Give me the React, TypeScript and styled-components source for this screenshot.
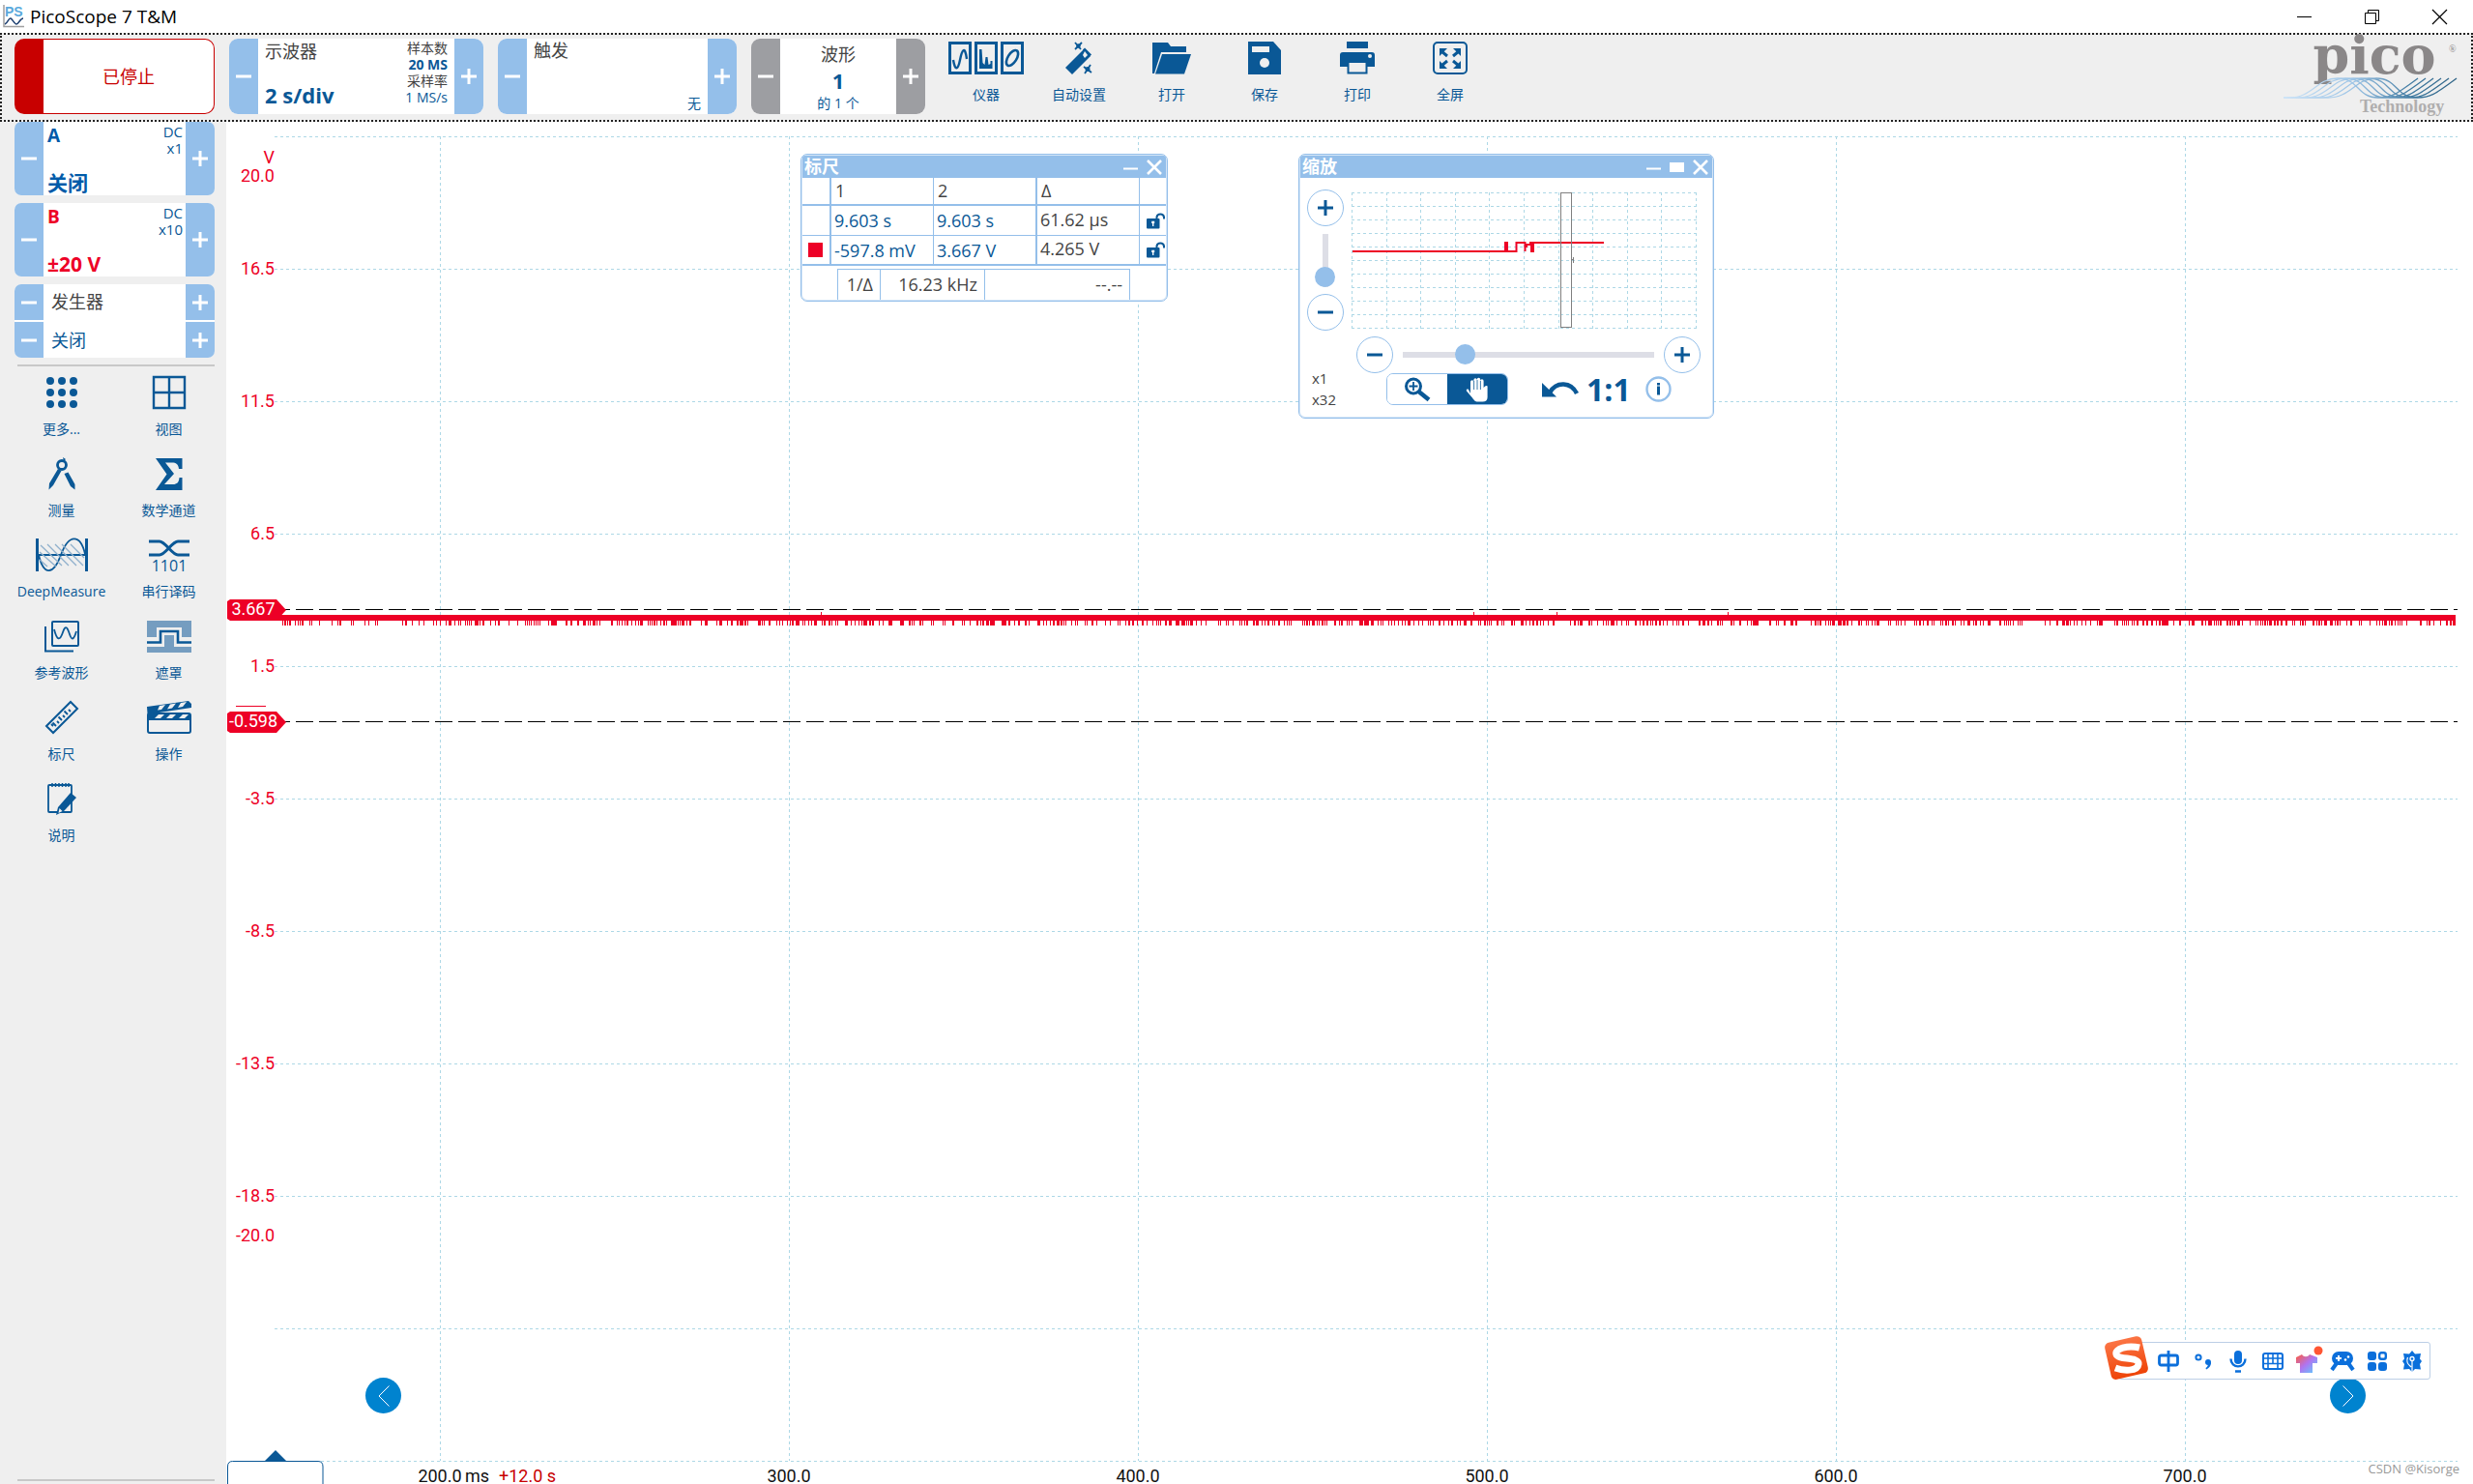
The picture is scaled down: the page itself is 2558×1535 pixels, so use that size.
import React, { ReactNode, useLayoutEffect, useMemo, useRef, useState } from "react";
import styled, { createGlobalStyle } from "styled-components";

const C = {
  blue: "#0a5896",
  light: "#94bfea",
  grey: "#9d9ea2",
  panel: "#efefef",
  text: "#444444",
  red: "#ed0026",
  stop: "#c80000",
  grid: "#add8e6",
};

const Global = createGlobalStyle`
  * { box-sizing: border-box; }
  body { margin: 0; background: #fff; overflow: hidden; }
  button { font: inherit; color: inherit; background: none; border: 0; padding: 0; margin: 0; cursor: pointer; }
  svg { display: block; overflow: visible; }
`;

const Page = styled.div`
  display: flex;
  flex-direction: column;
  height: 100vh;
  color: ${C.text};
  font: 14px/20px "Open Sans", "Noto Sans CJK SC", sans-serif;
`;

/* ---------- title bar ---------- */
const TitleBar = styled.header`
  display: flex;
  align-items: center;
  height: 34px;
  padding-left: 3px;
  gap: 6px;
  color: #000;
`;
const Title = styled.h1`
  flex: 1;
  margin: 0;
  font-size: 19px;
  line-height: 32px;
  font-weight: 400;
`;
const WindowButtons = styled.div`
  display: flex;
`;
const WindowButton = styled.button`
  display: grid;
  place-items: center;
  width: 70px;
  height: 34px;
`;

/* ---------- toolbar ---------- */
const Toolbar = styled.div`
  display: flex;
  align-items: flex-start;
  gap: 15px;
  padding: 4px 13px 6px;
  border: 2px dotted #222;
  background: ${C.panel};
`;
const StopButton = styled.button`
  width: 207px;
  height: 78px;
  overflow: hidden;
  border: 1px solid ${C.stop};
  border-left: 30px solid ${C.stop};
  border-radius: 10px;
  background: #fff;
  color: ${C.stop};
  font-size: 18px;
`;
const Stepper = styled.section<{ $width: number; $height: number; $radius: number }>`
  display: flex;
  width: ${(p) => p.$width}px;
  height: ${(p) => p.$height}px;
  border-radius: ${(p) => p.$radius}px;
  overflow: hidden;
  background: #fff;
`;
const StepButton = styled.button<{ $grey?: boolean }>`
  display: grid;
  place-items: center;
  flex: none;
  width: 30px;
  background: ${(p) => (p.$grey ? C.grey : C.light)};
`;
const StepColumn = styled.div`
  display: grid;
  grid-template-rows: 1fr 1fr;
  gap: 2px;
`;
const StepBody = styled.div<{ $pad: string }>`
  display: flex;
  flex: 1;
  justify-content: space-between;
  padding: ${(p) => p.$pad};
`;
const Stack = styled.div<{ $align?: string; $spread?: boolean }>`
  display: flex;
  flex-direction: column;
  flex: ${(p) => (p.$align === "center" ? 1 : "none")};
  align-items: ${(p) => p.$align || "flex-start"};
  justify-content: ${(p) => (p.$spread ? "space-between" : "flex-start")};
`;
const Txt = styled.span<{ $size?: number; $line?: number; $bold?: boolean; $color?: string }>`
  font-size: ${(p) => p.$size || 14}px;
  line-height: ${(p) => p.$line || 17}px;
  font-weight: ${(p) => (p.$bold ? 700 : 400)};
  color: ${(p) => p.$color || C.text};
  white-space: nowrap;
`;
const ToolRow = styled.nav`
  display: flex;
  padding-top: 3px;
`;
const Tool = styled.button`
  display: flex;
  flex-direction: column;
  align-items: center;
  gap: 11px;
  width: 96px;
  color: ${C.blue};
  font-size: 14px;
  line-height: 20px;
  white-space: nowrap;
`;
const Brand = styled.div`
  margin-left: auto;
`;

/* ---------- side bar ---------- */
const Main = styled.main`
  display: flex;
  flex: 1;
  min-height: 0;
`;
const Sidebar = styled.aside`
  display: flex;
  flex-direction: column;
  flex: none;
  width: 234px;
  background: ${C.panel};
`;
const Channels = styled.div`
  display: flex;
  flex-direction: column;
  gap: 8px;
  padding: 0 12px 7px 15px;
`;
const Divider = styled.hr`
  width: 204px;
  height: 2px;
  margin: 0 0 0 18px;
  border: 0;
  background: #c8c8c8;
`;
const ToolGrid = styled.nav`
  display: grid;
  grid-template-columns: 111px 111px;
  justify-items: center;
  row-gap: 19px;
  flex: 1;
  align-content: start;
  padding: 10px 0 0 8px;
`;
const SideFoot = styled.div`
  padding-bottom: 3px;
`;

/* ---------- chart ---------- */
const ChartArea = styled.section`
  position: relative;
  flex: 1;
  min-width: 0;
  overflow: hidden;
  background: #fff;
`;
const PageButton = styled.button<{ $side: "left" | "right" }>`
  position: absolute;
  bottom: 73px;
  ${(p) => (p.$side === "left" ? "left: 144px;" : "right: 111px;")}
  display: grid;
  place-items: center;
  width: 37px;
  height: 37px;
  border-radius: 50%;
  background: #0083cf;
`;
const Watermark = styled.span`
  position: absolute;
  right: 14px;
  bottom: 6px;
  font-size: 13px;
  color: #999;
`;

/* ---------- floating panels ---------- */
const Panel = styled.section<{ $left: number; $width: number }>`
  position: absolute;
  top: 33px;
  left: ${(p) => p.$left}px;
  width: ${(p) => p.$width}px;
  padding: 1px;
  overflow: hidden;
  border: 1px solid ${C.light};
  border-radius: 7px;
  background: #fff;
  box-shadow: inset 0 0 0 1px #d4e5f7;
`;
const PanelHead = styled.header`
  display: flex;
  align-items: center;
  gap: 9px;
  height: 23px;
  padding: 0 4px 0 2px;
  background: ${C.light};
`;
const PanelTitle = styled.h2`
  flex: 1;
  margin: 0;
  color: #fff;
  font-size: 18px;
  line-height: 23px;
  font-weight: 700;
`;
const RulerTable = styled.table`
  width: 100%;
  table-layout: fixed;
  border-collapse: separate;
  border-spacing: 0;
  font-size: 18px;
  line-height: 24px;
`;
const Cell = styled.td<{ $right?: number; $bottom?: number; $blue?: boolean; $delta?: boolean }>`
  height: 31px;
  padding: ${(p) => (p.$delta ? "0 0 3px 3px" : "0 0 0 3px")};
  border: 0 solid ${C.light};
  border-right-width: ${(p) => p.$right || 0}px;
  border-bottom-width: ${(p) => p.$bottom || 0}px;
  color: ${(p) => (p.$blue ? C.blue : C.text)};
  white-space: nowrap;
`;
const HeadCell = styled.th<{ $right?: number }>`
  height: 29px;
  padding: 0 0 2px 4px;
  border: 0 solid ${C.light};
  border-right-width: ${(p) => p.$right || 0}px;
  border-bottom-width: 2px;
  text-align: left;
  font-weight: 400;
`;
const Swatch = styled.i`
  display: block;
  width: 15px;
  height: 15px;
  margin-left: 3px;
  background: ${C.red};
`;
const LockButton = styled.button`
  display: block;
  margin-left: 4px;
`;
const FreqTable = styled.table`
  width: 303px;
  margin: 3px 0 0 36px;
  table-layout: fixed;
  border-collapse: separate;
  border-spacing: 0;
  border-left: 1px solid ${C.light};
  border-top: 1px solid ${C.light};
  font-size: 18px;
  line-height: 24px;
`;
const FreqCell = styled.td`
  height: 31px;
  padding: 0 7px 2px;
  border-right: 1px solid ${C.light};
  text-align: right;
  white-space: nowrap;
`;

const ZoomTop = styled.div`
  display: flex;
  gap: 8px;
  padding: 12px 7px 0;
`;
const ZoomVertical = styled.div`
  display: flex;
  flex-direction: column;
  align-items: center;
  justify-content: space-between;
  width: 38px;
  height: 146px;
`;
const MapWrap = styled.div`
  padding-top: 3px;
`;
const RoundButton = styled.button`
  display: grid;
  place-items: center;
  flex: none;
  width: 38px;
  height: 38px;
  border: 1px solid ${C.light};
  border-radius: 50%;
`;
const Slider = styled.input<{ $vertical?: boolean }>`
  appearance: none;
  margin: 0;
  background: transparent;
  width: ${(p) => (p.$vertical ? "21px" : "260px")};
  height: ${(p) => (p.$vertical ? "55px" : "21px")};
  ${(p) => (p.$vertical ? "writing-mode: vertical-lr; direction: rtl;" : "")}
  &::-webkit-slider-runnable-track {
    ${(p) => (p.$vertical ? "width: 6px;" : "height: 6px;")}
    background: #dddee6;
  }
  &::-webkit-slider-thumb {
    appearance: none;
    width: 21px;
    height: 21px;
    ${(p) => (p.$vertical ? "margin-left: -8px;" : "margin-top: -8px;")}
    border-radius: 50%;
    background: ${C.light};
  }
`;
const ZoomBottom = styled.div`
  display: grid;
  grid-template-columns: 58px 1fr;
  grid-template-rows: 38px 38px;
  padding: 6px 0 7px;
`;
const Factors = styled.div`
  grid-row: 1 / 3;
  align-self: end;
  display: flex;
  flex-direction: column;
  padding-left: 12px;
  font-size: 15px;
  line-height: 22px;
`;
const SliderRow = styled.div`
  display: flex;
  align-items: center;
  gap: 10px;
`;
const ActionRow = styled.div`
  display: flex;
  align-items: flex-start;
  gap: 35px;
  padding-left: 31px;
`;
const ModeSwitch = styled.div`
  display: flex;
  width: 126px;
  height: 33px;
  overflow: hidden;
  border: 1px solid ${C.light};
  border-radius: 7px;
`;
const ModeButton = styled.button<{ $on?: boolean }>`
  display: grid;
  place-items: center;
  flex: 1;
  background: ${(p) => (p.$on ? C.blue : "#fff")};
`;
const Actions = styled.div`
  display: flex;
  align-items: center;
  gap: 8px;
  height: 33px;
`;
const OneToOne = styled.button`
  width: 53px;
  text-align: left;
  color: ${C.blue};
  font-size: 32px;
  line-height: 32px;
  font-weight: 700;
`;

/* ---------- input method bar ---------- */
const ImeBar = styled.div`
  position: absolute;
  right: 44px;
  bottom: 108px;
  display: flex;
  align-items: center;
  height: 39px;
  padding-left: 33px;
  border: 1px solid #bccfe6;
  border-radius: 3px;
  background: #fff;
`;
const ImeLogo = styled.span`
  position: absolute;
  left: -16px;
  bottom: -2px;
`;
const ImeButton = styled.button`
  display: grid;
  place-items: center;
  width: 36px;
  height: 37px;
`;

/* ---------- small glyphs ---------- */
const Minus = ({ color = "#fff", size = 16 }: { color?: string; size?: number }) => (
  <svg width={size} height={size} viewBox="0 0 16 16"><path d="M0 8H16" stroke={color} strokeWidth="3" /></svg>
);
const Plus = ({ color = "#fff", size = 16 }: { color?: string; size?: number }) => (
  <svg width={size} height={size} viewBox="0 0 16 16"><path d="M0 8H16M8 0V16" stroke={color} strokeWidth="3" /></svg>
);
const PanelMin = () => (
  <svg width="15" height="16"><path d="M0 9.500H15" stroke="#fff" strokeWidth="2" /></svg>
);
const PanelMax = () => (
  <svg width="15" height="16"><rect y="3" width="15" height="10" fill="#fff" /></svg>
);
const PanelClose = () => (
  <svg width="16" height="16"><path d="M1 1L15 15M15 1L1 15" stroke="#fff" strokeWidth="2.600" /></svg>
);
const Lock = () => (
  <svg width="19" height="17" viewBox="0 0 19 17">
    <path d="M10.500 6V4.500a3.800 3.500 0 0 1 7.500 0V6.500" fill="none" stroke={C.blue} strokeWidth="2" />
    <rect x="0" y="6" width="13.500" height="10.500" rx="1" fill={C.blue} />
    <path d="M5.200 8.800h3v2.200h-.8v3h-1.400v-3h-.8z" fill="#fff" />
  </svg>
);

/* ---------- tool icons ---------- */
const B = C.blue;
const I = ({ w = 34, children }: { w?: number; children: ReactNode }) => (
  <svg width={w} height="34" viewBox={`0 0 ${w} 34`} fill="none" stroke={B} strokeWidth="2">{children}</svg>
);
const icons: Record<string, ReactNode> = {
  仪器: (
    <I w={78}>
      <g strokeWidth="3">
        <rect x="1.500" y="1.500" width="21" height="31" /><rect x="28.500" y="1.500" width="21" height="31" /><rect x="55.500" y="1.500" width="21" height="31" />
        <path d="M5 19C7 31 10 29 12 19S17 3 19 18" strokeWidth="2.400" />
        <ellipse cx="66" cy="17" rx="4.500" ry="9" transform="rotate(32 66 17)" strokeWidth="2.600" />
      </g>
      <path d="M32 28V8h2.500l1 14 2 2 1-8 2 0 1 8 2-1 0-3h2v8z" fill={B} stroke="none" />
    </I>
  ),
  自动设置: (
    <I w={30}>
      <path d="M1 27L20 8l7 7L8 34z" fill={B} stroke="none" />
      <path d="M20 7.500l7 7" strokeWidth="3" />
      <path d="M19 14l2-4 3 4-3 3z" fill={C.panel} stroke="none" />
      <path d="M11 1l6 7M18 1l-7 7M20 26l8 6M27 24l-6 9" strokeWidth="1.800" />
      <circle cx="14.500" cy="4.500" r="2.200" fill={B} stroke="none" /><circle cx="24" cy="28.500" r="2.500" fill={B} stroke="none" />
    </I>
  ),
  打开: (
    <I w={42}>
      <path d="M1 33V1h16l3 4h16v6H10L3 33z" fill={B} stroke="none" />
      <path d="M4 33.500L11 13h30L34 33.500z" fill={B} stroke="none" />
    </I>
  ),
  保存: (
    <I>
      <path d="M0 0H26L34 9V34H0z" fill={B} stroke="none" />
      <rect x="4" y="5" width="18" height="6" fill={C.panel} stroke="none" /><circle cx="17" cy="22" r="5" fill={C.panel} stroke="none" />
    </I>
  ),
  打印: (
    <I w={36}>
      <g fill={B} stroke="none"><rect x="7" y="0" width="22" height="7" /><path d="M3 11H33a3 3 0 0 1 3 3V26H28V21H8V26H0V14a3 3 0 0 1 3-3z" /></g>
      <rect x="8.500" y="21" width="19" height="11.500" fill={C.panel} /><circle cx="31" cy="15" r="2" fill={C.panel} stroke="none" />
    </I>
  ),
  全屏: (
    <I w={36}>
      <rect x="1" y="1" width="34" height="32" rx="4" />
      <path d="M9 10l6 5M27 10l-6 5M9 25l6-5M27 25l-6-5" strokeWidth="3" />
      <path d="M7 7h8l-8 8zM29 7v8l-8-8zM7 28v-8l8 8zM29 28h-8l8-8z" fill={B} stroke="none" />
    </I>
  ),
  "更多...": (
    <I>
      {[5, 17, 29].map((y) => [5, 17, 29].map((x) => <circle key={`${x}-${y}`} cx={x} cy={y} r="4" fill={B} stroke="none" />))}
    </I>
  ),
  视图: <I><path d="M1 1H33V33H1zM17 1V33M1 17H33" strokeWidth="2.400" /></I>,
  测量: (
    <I w={30}>
      <circle cx="15" cy="8" r="4.500" strokeWidth="2.800" /><path d="M16 0l3 2-2 2z" fill={B} stroke="none" />
      <path d="M11 12L14.500 14 6 29 1.500 33.500 2 27zM17.500 17L21.500 15.500 28.500 28V33.500L24 30z" fill={B} stroke="none" />
    </I>
  ),
  数学通道: (
    <I w={30}>
      <path d="M1 1H28.500V12H25C24.500 7 22 5.500 18 5.500H11L20 17 10 28H19C23 28 25 26 25.500 21H28.500V34H1L12.500 17.500z" fill={B} stroke="none" />
    </I>
  ),
  DeepMeasure: (
    <I w={54}>
      <path d="M1.500 0V34M52.500 0V34" strokeWidth="3" />
      <path d="M3 17H51" /><path d="M3 17C8 38 18 39 26 17S46 -5 51 16" strokeWidth="1.800" />
      <path d="M4 22l8 7M4 14l17 15M5 7l22 21M12 6l22 22M20 6l22 22M27 6l22 22M36 6l14 14" stroke="#8fb0cc" strokeWidth="1.300" />
    </I>
  ),
  串行译码: (
    <I w={42}>
      <path d="M0 3H11C17 3 24 17 30 17H42M0 17H11C17 17 24 3 30 3H42" strokeWidth="3" />
      <text x="21" y="34" textAnchor="middle" fontSize="16" fontFamily="Open Sans, sans-serif" fill={B} stroke="none">1101</text>
    </I>
  ),
  参考波形: (
    <I w={36}>
      <rect x="8" y="2" width="27" height="25" rx="1" /><path d="M1 7V32.500H30" />
      <path d="M10 10C13 22 16 22 19 13S24 9 26 15 30 22 33 12" strokeWidth="1.800" />
    </I>
  ),
  遮罩: (
    <I w={46}>
      <path d="M0 1H46V18H36V8H10V18H0zM0 28H18V16H28V28H46V34H0z" fill="#759dc0" stroke="none" />
      <path d="M0 23.500H14V12H32V23.500H46" strokeWidth="2.600" />
    </I>
  ),
  标尺: (
    <I>
      <path d="M1 26L26 1l7 7L8 33z" />
      <path d="M8 26l-2-2M11 26l-3.500-3.500M14 23l-2-2M17 20l-3.500-3.500M20 17l-2-2M23 14l-3.500-3.500M26 11l-2-2" strokeWidth="1.800" />
    </I>
  ),
  操作: (
    <I w={46}>
      <rect x="1" y="13" width="44" height="20" rx="2" />
      <path d="M1 13H45V20H1zM0 6L43 0 46 3V7L6 13 1 20z" fill={B} stroke="none" />
      <path d="M13 5l6-1-4 5-4 .5zM24 3.500l6-1-4 5-5 1zM35 2l6-1-4 5-5 1zM8 18l4-4h6l-4 4zM20 18l4-4h6l-4 4zM33 18l4-4h6l-4 4z" fill={C.panel} stroke="none" />
    </I>
  ),
  说明: (
    <I w={32}>
      <rect x="2" y="3" width="24" height="28" rx="1" strokeWidth="1.800" />
      <path d="M6 1V5M9.500 1V5M13 1V5M16.500 1V5M20 1V5M23 1V5" strokeWidth="1.500" />
      <path d="M25 11l6 5L18 30l-8 4 2-8z" fill={B} stroke="none" /><path d="M13.500 27l3 3-4 2z" fill={C.panel} stroke="none" />
    </I>
  ),
};
const ToolButton = ({ name }: { name: string }) => <Tool>{icons[name]}<span>{name}</span></Tool>;

const TOP_TOOLS = ["仪器", "自动设置", "打开", "保存", "打印", "全屏"];
const SIDE_TOOLS = ["更多...", "视图", "测量", "数学通道", "DeepMeasure", "串行译码", "参考波形", "遮罩", "标尺", "操作", "说明"];

const PicoLogo = () => (
  <svg width="181" height="78" viewBox="0 0 181 78">
    <defs>
      <linearGradient id="wave" gradientUnits="userSpaceOnUse" x1="0" y1="0" x2="180" y2="0">
        <stop offset="0" stopColor="#cfe4f7" /><stop offset=".4" stopColor="#9cc4e6" /><stop offset=".75" stopColor="#3e789f" /><stop offset="1" stopColor="#2f6385" />
      </linearGradient>
    </defs>
    <text x="94" y="36" textAnchor="middle" fontFamily="DejaVu Serif, serif" fontWeight="700" fontSize="54" fill="#8a8788">pico</text>
    <text x="171" y="14" fontFamily="Liberation Serif, serif" fontSize="10" fill="#8a8788">®</text>
    {[0, 1, 2, 3, 4, 5].map((i) => {
      const x = i * 8;
      return (
        <path
          key={i}
          d={`M0 61H${x + 6}C${x + 30} 61 ${x + 34} 41 ${x + 56} 41S${x + 76} 61 ${x + 98} 61C${x + 112} 61 ${x + 116} 58 ${x + 139} 41`}
          fill="none" stroke="url(#wave)" strokeWidth="1.300"
        />
      );
    })}
    <text x="79" y="76" fontFamily="Liberation Serif, serif" fontWeight="700" fontSize="18" fill="#b0aeae">Technology</text>
  </svg>
);

/* ---------- main chart ---------- */
const T_START = 152.63;
const T_SPAN = 625.48;

function Chart({ width, height }: { width: number; height: number }) {
  const left = 50;
  const right = width - 16;
  const top = 15;
  const bottom = height - 24;
  const div = (bottom - top) / 10;
  const px = (t: number) => Math.round(left + ((t - T_START) / T_SPAN) * (right - left));
  const py = (v: number) => Math.round(top + div + ((16.5 - v) / 5) * div);
  const noise = useMemo(() => {
    let seed = 7;
    let d = "";
    for (let x = left; x < right - 2; x++) {
      seed = (seed * 1103515245 + 12345) % 2147483648;
      const dense = x > 300 ? 0.34 : 0.22;
      if (seed / 2147483648 < dense) d += `M${x} 0h1v5h-1z`;
    }
    return d;
  }, [left, right]);
  const lines = Array.from({ length: 11 }, (_, i) => Math.round(top + i * div));
  const times = [200, 300, 400, 500, 600, 700];
  const volts = [16.5, 11.5, 6.5, 1.5, -3.5, -8.5, -13.5, -18.5];
  const trace = py(3.667) + 6;
  return (
    <svg width={width} height={height} fontFamily="Roboto, sans-serif" fontSize="18">
      <g stroke={C.grid} strokeDasharray="3 3">
        {lines.map((y) => <path key={y} d={`M${left} ${y + 0.5}H${right}`} />)}
        {times.map((t) => <path key={t} d={`M${px(t) + 0.5} ${top}V${bottom}`} />)}
      </g>
      <path
        d={`M${left - 2} ${py(3.667) + 0.5}H${right}M${left - 2} ${py(-0.598) + 0.5}H${right}`}
        stroke="#000" strokeDasharray="18 6" shapeRendering="crispEdges"
      />
      <rect x={left} y={trace} width={right - left - 2} height="6" fill={C.red} />
      <path transform={`translate(0 ${trace + 6})`} d={noise} fill={C.red} />
      <path d={[309, 496, 520, 569].map((t) => `M${px(t) + 0.5} ${trace - 3}v3`).join("")} stroke={C.red} />
      <g fill={C.red} textAnchor="end">
        <text x={left} y={py(20) - 13}>V</text>
        <text x={left} y={py(20) + 6}>20.0</text>
        {volts.map((v) => <text key={v} x={left} y={py(v) + 6}>{v.toFixed(1)}</text>)}
        <text x={left} y={py(-20) + 6}>-20.0</text>
      </g>
      <path d={`M10 ${py(0) + 0.5}h31`} stroke={C.red} />
      {[3.667, -0.598].map((v) => {
        const y = py(v);
        return (
          <g key={v}>
            <path d={`M1 ${y - 8}l3 -2H52L62 ${y + 1}L52 ${y + 12}H4l-3 -2z`} fill={C.red} />
            <text x="28" y={y + 6} textAnchor="middle" fill="#fff">{v.toFixed(3)}</text>
          </g>
        );
      })}
      <g fill="#111" textAnchor="middle">
        {times.map((t) => <text key={t} x={px(t)} y={height - 2}>{t.toFixed(1)}</text>)}
      </g>
      <text x={px(200) + 26} y={height - 2} fill="#111">ms</text>
      <text x={px(200) + 61} y={height - 2} fill={C.stop}>+12.0 s</text>
      <path d={`M1.500 ${height + 8}V${bottom + 6}q0 -5.500 5 -5.500H95q5 0 5 5.500V${height + 8}`} fill="#fff" stroke={B} />
      <path d={`M40 ${bottom}l11 -11 11 11z`} fill={B} />
    </svg>
  );
}

const MiniMap = () => (
  <svg width="358" height="142" fill="none">
    <g stroke={C.grid} strokeDasharray="3 3">
      {Array.from({ length: 11 }, (_, i) => <path key={`h${i}`} d={`M0 ${i * 14 + 0.5}H357`} />)}
      {Array.from({ length: 11 }, (_, i) => <path key={`v${i}`} d={`M${Math.round(i * 35.6) + 0.5} 0V141`} />)}
    </g>
    <path d="M1 61H170.500V52H179.500V61M181 57V54H186M184 52H261" stroke={C.red} strokeWidth="2" />
    <path d="M158 51h4v11h-4zM185 51h4v11h-4z" fill={C.red} />
    <rect x="216.500" y=".5" width="11" height="139" stroke="#808080" />
    <path d="M228 69.500h2M229.500 67v6" stroke="#808080" />
  </svg>
);

function ReadoutHead({ title, max }: { title: string; max?: boolean }) {
  return (
    <PanelHead>
      <PanelTitle>{title}</PanelTitle>
      <button aria-label="minimise"><PanelMin /></button>
      {max && <button aria-label="maximise"><PanelMax /></button>}
      <button aria-label="close"><PanelClose /></button>
    </PanelHead>
  );
}

const RulerPanel = () => (
  <Panel $left={594} $width={380}>
    <ReadoutHead title="标尺" />
    <RulerTable>
      <colgroup><col width="30" /><col width="106" /><col width="107" /><col width="106" /><col /></colgroup>
      <thead>
        <tr><HeadCell $right={2} /><HeadCell $right={1}>1</HeadCell><HeadCell $right={2}>2</HeadCell><HeadCell $right={1}>Δ</HeadCell><HeadCell /></tr>
      </thead>
      <tbody>
        <tr>
          <Cell $right={2} $bottom={1} /><Cell $right={1} $bottom={1} $blue>9.603 s</Cell><Cell $right={2} $bottom={1} $blue>9.603 s</Cell>
          <Cell $right={1} $bottom={1} $delta>61.62 µs</Cell><Cell $bottom={1}><LockButton aria-label="lock time rulers"><Lock /></LockButton></Cell>
        </tr>
        <tr>
          <Cell $right={2} $bottom={2}><Swatch /></Cell><Cell $right={1} $bottom={2} $blue>-597.8 mV</Cell><Cell $right={2} $bottom={2} $blue>3.667 V</Cell>
          <Cell $right={1} $bottom={2} $delta>4.265 V</Cell><Cell $bottom={2}><LockButton aria-label="lock voltage rulers"><Lock /></LockButton></Cell>
        </tr>
      </tbody>
    </RulerTable>
    <FreqTable>
      <colgroup><col width="44" /><col width="108" /><col /></colgroup>
      <tbody><tr><FreqCell>1/Δ</FreqCell><FreqCell>16.23 kHz</FreqCell><FreqCell>--.--</FreqCell></tr></tbody>
    </FreqTable>
  </Panel>
);

const ZoomPanel = () => (
  <Panel $left={1109} $width={430}>
    <ReadoutHead title="缩放" max />
    <ZoomTop>
      <ZoomVertical>
        <RoundButton aria-label="zoom in vertically"><Plus color={B} /></RoundButton>
        <Slider $vertical type="range" aria-label="vertical zoom" min={0} max={100} defaultValue={0} />
        <RoundButton aria-label="zoom out vertically"><Minus color={B} /></RoundButton>
      </ZoomVertical>
      <MapWrap><MiniMap /></MapWrap>
    </ZoomTop>
    <ZoomBottom>
      <Factors><span>x1</span><span>x32</span></Factors>
      <SliderRow>
        <RoundButton aria-label="zoom out horizontally"><Minus color={B} /></RoundButton>
        <Slider type="range" aria-label="horizontal zoom" min={0} max={1000} defaultValue={226} />
        <RoundButton aria-label="zoom in horizontally"><Plus color={B} /></RoundButton>
      </SliderRow>
      <ActionRow>
        <ModeSwitch>
          <ModeButton aria-label="zoom mode">
            <svg width="28" height="26" viewBox="0 0 28 26" fill="none" stroke={B}>
              <circle cx="10" cy="9.500" r="7.500" strokeWidth="3" /><path d="M5.500 9.500H14.500M10 5V14" strokeWidth="1.800" /><path d="M15.500 15L26 23.500" strokeWidth="4.500" />
            </svg>
          </ModeButton>
          <ModeButton $on aria-label="pan mode">
            <svg width="24" height="26" viewBox="0 0 24 26" fill="#fff">
              <path d="M5 17V5a1.700 1.700 0 0 1 3.400 0V3a1.700 1.700 0 0 1 3.400 0V2.500a1.700 1.700 0 0 1 3.400 0V4a1.700 1.700 0 0 1 3.400 0V11l1.500-1.500c1-1 3-.5 2.500 1V21c0 3-2 4.500-5 4.500H13c-3 0-4-1-6-4L1 14.500c-.8-1.500 1-2.500 2-1.500z" />
              <path d="M8.600 4V13M12 3V13M15.400 4V13" stroke={B} strokeWidth=".8" />
            </svg>
          </ModeButton>
        </ModeSwitch>
        <Actions>
          <button aria-label="undo zoom">
            <svg width="38" height="18" viewBox="0 0 38 18"><path d="M8 12C15 0 30 1 36 13" fill="none" stroke={B} strokeWidth="4.500" /><path d="M0 2V16.500H15z" fill={B} /></svg>
          </button>
          <OneToOne>1:1</OneToOne>
          <button aria-label="information">
            <svg width="27" height="27"><circle cx="13.500" cy="13.500" r="12" fill="none" stroke={C.light} strokeWidth="2.400" /><path d="M13.500 7V9.500M12 12H13.500V19.500" stroke={B} strokeWidth="3" fill="none" /></svg>
          </button>
        </Actions>
      </ActionRow>
    </ZoomBottom>
  </Panel>
);

const M = "#0b6fdb";
const Ime = () => (
  <ImeBar>
    <ImeLogo>
      <svg width="48" height="47" viewBox="0 0 48 47">
        <defs><linearGradient id="sg" x1="0" y1="0" x2="0" y2="1"><stop offset="0" stopColor="#fb7444" /><stop offset="1" stopColor="#ee4408" /></linearGradient></defs>
        <rect x="4" y="4" width="39" height="39" rx="5" fill="url(#sg)" transform="rotate(-13 24 23.500)" />
        <path d="M37 13C25 10 11 14 13 20S37 22 36 30 20 37 12 34" fill="none" stroke="#fff" strokeWidth="7" />
      </svg>
    </ImeLogo>
    <ImeButton aria-label="中文">
      <svg width="22" height="22" fill="none" stroke={M} strokeWidth="2.800"><rect x="1.500" y="5" width="19" height="10" rx="2" /><path d="M11 0V22" /></svg>
    </ImeButton>
    <ImeButton aria-label="标点">
      <svg width="18" height="18"><circle cx="4" cy="5" r="2.600" fill="none" stroke={M} strokeWidth="2" /><circle cx="14" cy="10" r="3" fill={M} /><path d="M17 10C17 14 15 16 12 17.500L11.500 16C13 15 14 13.500 14 12z" fill={M} /></svg>
    </ImeButton>
    <ImeButton aria-label="语音">
      <svg width="18" height="24" fill="none" stroke={M} strokeWidth="2.400"><rect x="5" y="1" width="8" height="14" rx="4" fill={M} stroke="none" /><path d="M1.500 9.500C1.500 20 16.500 20 16.500 9.500M6 22.500H12" /></svg>
    </ImeButton>
    <ImeButton aria-label="键盘">
      <svg width="22" height="18"><rect x="1" y="1" width="20" height="16" rx="2" fill="#fff" stroke={M} strokeWidth="2" /><path d="M1 6H21M1 11.500H21M6 1V17M11 1V11M16 1V17" stroke={M} strokeWidth="1.600" /></svg>
    </ImeButton>
    <ImeButton aria-label="皮肤">
      <svg width="28" height="30">
        <defs><linearGradient id="sh" x1="0" y1="0" x2="1" y2="1"><stop offset="0" stopColor="#ff5a3c" /><stop offset=".5" stopColor="#b074f0" /><stop offset="1" stopColor="#58d4ff" /></linearGradient></defs>
        <path d="M2 11L8 8C10 11 14 11 16 8L24 11V17H19V27H6V17H2z" fill="url(#sh)" /><circle cx="25" cy="4" r="4.500" fill="#ff5533" />
      </svg>
    </ImeButton>
    <ImeButton aria-label="游戏">
      <svg width="24" height="20"><rect x="1" width="22" height="14" rx="7" fill={M} /><path d="M1 19L6 12M23 19L18 12" stroke={M} strokeWidth="4" /><path d="M5 7h6M8 4v6" stroke="#fff" strokeWidth="2" /><circle cx="15" cy="8.500" r="1.300" fill="#fff" /><circle cx="18" cy="5.500" r="1.300" fill="#fff" /></svg>
    </ImeButton>
    <ImeButton aria-label="工具箱">
      <svg width="20" height="20" fill={M}><rect width="9" height="9" rx="3" /><rect y="11" width="9" height="9" rx="3" /><rect x="11" y="11" width="9" height="9" rx="3" /><rect x="12.200" y="1.200" width="6.600" height="6.600" rx="2" fill="none" stroke={M} strokeWidth="2.400" /></svg>
    </ImeButton>
    <ImeButton aria-label="设置">
      <svg width="20" height="22"><path d="M10 0l3 3.500 6-.5-1 5.500 2 2.500-2 3 1 5.500-6-.5-3 3-3-3-6 .5 1-5.500-2-3 2-2.500-1-5.500 6 .5z" fill={M} /><circle cx="10" cy="8.500" r="2" fill="none" stroke="#fff" strokeWidth="1.300" /><path d="M10 10.500V22M5.500 7C3 13 7 15 9 17" stroke="#fff" strokeWidth="1.200" fill="none" /></svg>
    </ImeButton>
  </ImeBar>
);

function Channel({ name, range, coupling, probe, color }: { name: string; range: string; coupling: string; probe: string; color: string }) {
  return (
    <Stepper $width={207} $height={76} $radius={7}>
      <StepButton aria-label={`${name} -`}><Minus /></StepButton>
      <StepBody $pad="2px 3px 0 4px">
        <Stack $spread>
          <Txt $size={19} $line={24} $bold $color={color}>{name}</Txt>
          <Txt $size={21} $line={25} $bold $color={color}>{range}</Txt>
        </Stack>
        <Stack $align="flex-end">
          <Txt $size={15} $color={B}>{coupling}</Txt>
          <Txt $size={15} $color={B}>{probe}</Txt>
        </Stack>
      </StepBody>
      <StepButton aria-label={`${name} +`}><Plus /></StepButton>
    </Stepper>
  );
}

export default function App() {
  const area = useRef<HTMLElement>(null);
  const [size, setSize] = useState({ w: 0, h: 0 });
  useLayoutEffect(() => {
    const el = area.current!;
    const measure = () => setSize({ w: el.clientWidth, h: el.clientHeight });
    measure();
    const observer = new ResizeObserver(measure);
    observer.observe(el);
    return () => observer.disconnect();
  }, []);

  return (
    <Page>
      <Global />
      <TitleBar>
        <svg width="22" height="24" viewBox="0 0 22 24">
          <path d="M1 0V22.500H22" fill="none" stroke="#a0a0a0" strokeWidth="1.500" />
          <text x="2" y="12" fontFamily="Liberation Sans, sans-serif" fontWeight="700" fontSize="14" fill="#5aa9dc">PS</text>
          <path d="M2 20C5 19 6 13 8 14S12 20 14 20 18 14 21 14" fill="none" stroke="#1d3f70" strokeWidth="1.500" />
        </svg>
        <Title>PicoScope 7 T&amp;M</Title>
        <WindowButtons>
          <WindowButton aria-label="minimise"><svg width="15" height="15"><path d="M0 7.500H15" stroke="#000" /></svg></WindowButton>
          <WindowButton aria-label="restore"><svg width="15" height="15" fill="none" stroke="#000"><path d="M.5 3.500H11.500V14.500H.5zM3.500 3.500V.5H14.500V11.500H11.500" /></svg></WindowButton>
          <WindowButton aria-label="close"><svg width="15" height="15"><path d="M0 0L15 15M15 0L0 15" stroke="#000" strokeWidth="1.200" /></svg></WindowButton>
        </WindowButtons>
      </TitleBar>

      <Toolbar>
        <StopButton>已停止</StopButton>
        <Stepper $width={263} $height={78} $radius={9}>
          <StepButton aria-label="时基 -"><Minus /></StepButton>
          <StepBody $pad="1px 7px 5px 7px">
            <Stack $spread>
              <Txt $size={18} $line={24}>示波器</Txt>
              <Txt $size={22} $line={30} $bold $color={B}>2 s/div</Txt>
            </Stack>
            <Stack $align="flex-end">
              <Txt>样本数</Txt><Txt $bold $color={B}>20 MS</Txt><Txt>采样率</Txt><Txt $color={B}>1 MS/s</Txt>
            </Stack>
          </StepBody>
          <StepButton aria-label="时基 +"><Plus /></StepButton>
        </Stepper>
        <Stepper $width={247} $height={78} $radius={9}>
          <StepButton aria-label="触发 -"><Minus /></StepButton>
          <StepBody $pad="0 7px 3px">
            <Stack><Txt $size={18} $line={24}>触发</Txt></Stack>
            <Stack $spread><span /><Txt $color={B}>无</Txt></Stack>
          </StepBody>
          <StepButton aria-label="触发 +"><Plus /></StepButton>
        </Stepper>
        <Stepper $width={180} $height={78} $radius={9}>
          <StepButton $grey aria-label="波形 -"><Minus /></StepButton>
          <StepBody $pad="4px 0 1px">
            <Stack $align="center" $spread>
              <Txt $size={18} $line={24}>波形</Txt><Txt $size={22} $line={24} $bold $color={B}>1</Txt><Txt $color={B} $line={20}>的 1 个</Txt>
            </Stack>
          </StepBody>
          <StepButton $grey aria-label="波形 +"><Plus /></StepButton>
        </Stepper>
        <ToolRow>{TOP_TOOLS.map((name) => <ToolButton key={name} name={name} />)}</ToolRow>
        <Brand><PicoLogo /></Brand>
      </Toolbar>

      <Main>
        <Sidebar>
          <Channels>
            <Channel name="A" range="关闭" coupling="DC" probe="x1" color="#005ba9" />
            <Channel name="B" range="±20 V" coupling="DC" probe="x10" color={C.red} />
            <Stepper $width={207} $height={76} $radius={7}>
              <StepColumn>
                <StepButton aria-label="发生器 -"><Minus /></StepButton><StepButton aria-label="输出 -"><Minus /></StepButton>
              </StepColumn>
              <StepBody $pad="6px 8px">
                <Stack $spread><Txt $size={18} $line={24}>发生器</Txt><Txt $size={18} $line={24} $color={B}>关闭</Txt></Stack>
              </StepBody>
              <StepColumn>
                <StepButton aria-label="发生器 +"><Plus /></StepButton><StepButton aria-label="输出 +"><Plus /></StepButton>
              </StepColumn>
            </Stepper>
          </Channels>
          <Divider />
          <ToolGrid>{SIDE_TOOLS.map((name) => <ToolButton key={name} name={name} />)}</ToolGrid>
          <SideFoot><Divider /></SideFoot>
        </Sidebar>

        <ChartArea ref={area}>
          {size.w > 0 && <Chart width={size.w} height={size.h} />}
          <RulerPanel />
          <ZoomPanel />
          <PageButton $side="left" aria-label="上一个"><svg width="12" height="22"><path d="M11.500 .5L1 11 11.500 21.500" fill="none" stroke="#fff" /></svg></PageButton>
          <PageButton $side="right" aria-label="下一个"><svg width="12" height="22"><path d="M.5 .5L11 11 .5 21.500" fill="none" stroke="#fff" /></svg></PageButton>
          <Ime />
          <Watermark>CSDN @Kisorge</Watermark>
        </ChartArea>
      </Main>
    </Page>
  );
}
